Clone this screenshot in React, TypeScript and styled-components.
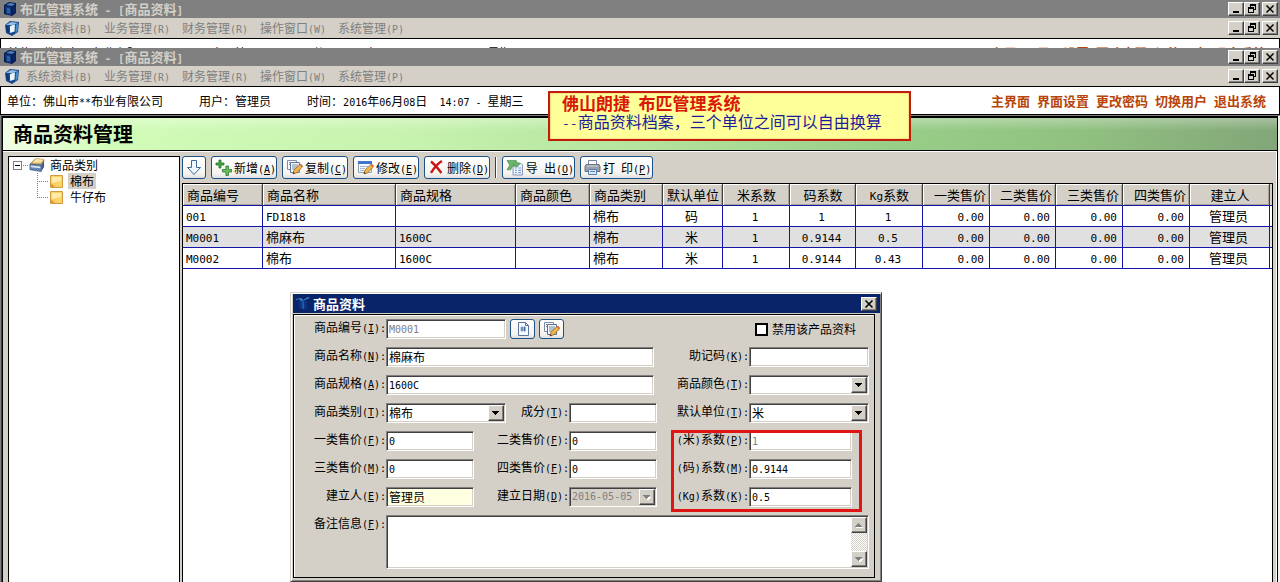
import React from "react";
import styled, { createGlobalStyle, css } from "styled-components";

const face = "#d4d0c8";
const sans = `"Noto Sans CJK SC", "Liberation Sans", sans-serif`;
const mono = `"DejaVu Sans Mono", "Liberation Mono", monospace`;

const GlobalStyle = createGlobalStyle`
  *, *::before, *::after { box-sizing: border-box; }
  body { margin: 0; background: ${face}; }
  button, input, select, textarea { font: inherit; color: inherit; margin: 0; }
`;

const raised = css`
  border: 1px solid;
  border-color: #fff #404040 #404040 #fff;
  box-shadow: inset -1px -1px 0 #808080;
  background: ${face};
`;

const sunken = css`
  border: 1px solid;
  border-color: #808080 #fff #fff #808080;
  box-shadow: inset 1px 1px 0 #404040, inset -1px -1px 0 ${face};
`;

/* ---------- text ---------- */

const Latin = styled.span`
  font-family: ${mono};
  font-size: var(--latin, 10px);
  line-height: 1;
  white-space: pre;
`;

const Key = styled.u`
  text-underline-offset: 1px;
`;

/* Sets half-width runs in the fixed-pitch face; "&" marks the access key. */
function Mixed({ text }: { text: string }) {
  const runs = text.match(/[\x00-\x7f]+|[^\x00-\x7f]+/g) ?? [];
  return (
    <>
      {runs.map((run, i) => {
        if (run.charCodeAt(0) > 127) return <span key={i}>{run}</span>;
        const at = run.indexOf("&");
        if (at < 0) return <Latin key={i}>{run}</Latin>;
        return (
          <Latin key={i}>
            {run.slice(0, at)}
            <Key>{run[at + 1]}</Key>
            {run.slice(at + 2)}
          </Latin>
        );
      })}
    </>
  );
}

/* ---------- shell ---------- */

const Shell = styled.div`
  position: relative;
  display: flex;
  flex-direction: column;
  height: 100vh;
  overflow: hidden;
  font-family: ${sans};
  font-size: 12px;
  line-height: 16px;
  color: #000;
`;

const BackWindow = styled.div`
  flex: none;
  height: 48px;
  overflow: hidden;
`;

const Frame = styled.header`
  flex: none;
`;

const TitleBar = styled.div`
  --latin: 11px;
  display: flex;
  align-items: center;
  gap: 2px;
  height: 18px;
  padding: 0 2px 0 3px;
  background: #808080;
  color: ${face};
  font-size: 13px;
  font-weight: 700;
`;

const MenuBar = styled.nav`
  display: flex;
  align-items: center;
  height: 20px;
  padding: 0 2px 0 5px;
  background: ${face};
`;

const MenuItem = styled.button`
  margin-left: 6px;
  padding: 0;
  width: 72px;
  border: 0;
  background: none;
  color: #808080;
  text-align: left;
  white-space: nowrap;
`;

const WindowButtons = styled.div`
  display: flex;
  margin-left: auto;
`;

const WindowButton = styled.button<{ $apart?: boolean }>`
  ${raised}
  display: grid;
  place-items: center;
  width: 16px;
  height: 14px;
  padding: 0;
  margin-left: ${(p) => (p.$apart ? 2 : 0)}px;
`;

const InfoBar = styled.div`
  display: flex;
  align-items: center;
  height: 29px;
  padding: 0 13px 0 6px;
  border: 1px solid #000;
  background: #fff;
  white-space: nowrap;
`;

const InfoText = styled.span`
  margin-right: 36px;
`;

const QuickLinks = styled.nav`
  display: flex;
  gap: 7px;
  margin-left: auto;
  font-size: 13px;
  font-weight: 700;
`;

const QuickLink = styled.a`
  color: #b84408;
  text-decoration: none;
`;

const Workspace = styled.main`
  flex: 1;
  min-height: 0;
  display: flex;
  padding: 0 2px 0 1px;
  border-top: 1px solid #808080;
  border-left: 1px solid #808080;
  background: linear-gradient(90deg, #404040 50%, #f4f2ee 50%);
`;

const Child = styled.section`
  flex: 1;
  min-width: 0;
  display: flex;
  flex-direction: column;
  border: solid #000;
  border-width: 2px 1px 0 1px;
`;

const Heading = styled.h1`
  flex: none;
  margin: 0;
  height: 33px;
  padding-left: 10px;
  border-bottom: 1px solid #000;
  background: linear-gradient(180deg, rgba(255, 255, 255, 0.3), rgba(255, 255, 255, 0) 40%),
    linear-gradient(93deg, #f2ffe8 0%, #d2fcb8 8%, #c6f3ae 32%, #b4e49e 50%, #98ce88 70%, #90c080 85%, #82a678 100%);
  font-size: 20px;
  line-height: 32px;
`;

const Panel = styled.div`
  flex: 1;
  min-height: 0;
  display: flex;
  gap: 2px;
  padding: 4px 3px 0 5px;
  border-top: 1px solid #fff;
  border-right: 1px solid #fff;
  background: ${face};
`;

/* ---------- tree ---------- */

const Tree = styled.ul`
  flex: none;
  width: 172px;
  margin: 0;
  padding: 0 0 0 4px;
  border: 1px solid #000;
  border-bottom: 0;
  background: #fff;
  list-style: none;
`;

const Branch = styled.ul`
  margin: 0;
  padding: 0 0 0 23px;
  list-style: none;
`;

const Node = styled.div`
  display: flex;
  align-items: center;
  height: 16px;
`;

const NodeName = styled.span<{ $active?: boolean }>`
  margin-left: 5px;
  background: ${(p) => (p.$active ? face : "none")};
  ${Branch} & { padding: 0 2px; }
`;

/* ---------- toolbar and grid ---------- */

const Main = styled.div`
  flex: 1;
  min-width: 0;
  display: flex;
  flex-direction: column;
  gap: 4px;
`;

const Toolbar = styled.div`
  display: flex;
  align-items: center;
  gap: 5px;
  height: 23px;
`;

const plate = css`
  display: flex;
  align-items: center;
  border: 1px solid #1d5187;
  border-radius: 3px;
  background: linear-gradient(180deg, #fff, #f4f3ee 80%, #dfe0e4);
`;

const ToolButton = styled.button<{ $w: number }>`
  ${plate}
  gap: 2px;
  width: ${(p) => p.$w}px;
  height: 23px;
  padding: 0 0 0 3px;
  white-space: nowrap;
`;

const Divider = styled.span`
  width: 2px;
  height: 21px;
  border-left: 1px solid #404040;
  border-right: 1px solid #fff;
`;

const GridBox = styled.div`
  --latin: 11px;
  flex: 1;
  min-height: 0;
  overflow: hidden;
  border: solid #000;
  border-width: 1px 1px 0 1px;
  background: #fff;
  font-size: 13px;
`;

const Table = styled.table`
  width: 100%;
  table-layout: fixed;
  border-collapse: separate;
  border-spacing: 0;
`;

type Align = "left" | "center" | "right";

const Th = styled.th<{ $align: Align }>`
  height: 22px;
  padding: 0 3px 0 4px;
  border-right: 1px solid #404040;
  border-bottom: 1px solid #1414a8;
  box-shadow: inset 1px 1px 0 #fff, inset -1px -1px 0 #a8a498;
  background: ${face};
  font-weight: 400;
  text-align: ${(p) => p.$align};
  white-space: nowrap;
`;

const Td = styled.td<{ $align: Align }>`
  height: 21px;
  padding: 0 5px 0 3px;
  border-right: 1px solid #1414a8;
  border-bottom: 1px solid #1414a8;
  text-align: ${(p) => p.$align};
  white-space: nowrap;
`;

const Rest = styled.td<{ $head?: boolean }>`
  padding: 0;
  border-bottom: 1px solid #1414a8;
  background: ${(p) => (p.$head ? face : "none")};
`;

const Row = styled.tr<{ $selected?: boolean }>`
  background: ${(p) => (p.$selected ? "#e0e0e0" : "#fff")};
`;

/* ---------- notes laid over the windows ---------- */

const Note = styled.aside`
  --latin: 13px;
  position: absolute;
  left: 548px;
  top: 91px;
  width: 363px;
  height: 50px;
  padding-left: 12px;
  border: 2px solid #c01c0c;
  background: #ffff99;
  color: #1c1c9c;
  font-size: 16px;
  line-height: 19px;
  white-space: nowrap;
  box-shadow: inset 0 0 2px #e8a060;
`;

const NoteTitle = styled.strong`
  --latin: 14px;
  display: block;
  color: #d81808;
  font-size: 17px;
`;

const Mark = styled.div`
  position: absolute;
  left: 671px;
  top: 430px;
  width: 191px;
  height: 82px;
  border: 3px solid #e01414;
  pointer-events: none;
`;

/* ---------- dialog ---------- */

const Dialog = styled.section`
  position: absolute;
  left: 290px;
  top: 292px;
  width: 592px;
  padding: 1px 1px 3px 2px;
  border: 1px solid;
  border-color: ${face} #404040 #404040 ${face};
  box-shadow: inset 1px 1px 0 #fff, inset -1px -1px 0 #808080;
  background: ${face};
`;

const DialogTitle = styled.h2`
  display: flex;
  align-items: center;
  gap: 3px;
  height: 19px;
  margin: 0 0 1px;
  padding: 0 3px;
  background: #0a246a;
  color: #fff;
  font-size: 13px;
  font-weight: 700;
`;

const Form = styled.form`
  display: grid;
  grid-template-columns: 91px 88px 95px 88px 92px 120px;
  grid-auto-rows: 28px;
  align-items: start;
  margin-right: 5px;
  padding: 4px 2px 34px 1px;
  border: 1px solid #000;
  box-shadow: inset 1px 1px 0 #fff;
`;

const Label = styled.label<{ $col: number; $row: number }>`
  grid-column: ${(p) => p.$col};
  grid-row: ${(p) => p.$row};
  text-align: right;
  white-space: nowrap;
`;

const Slot = styled.div<{ $col: string; $row: number }>`
  grid-column: ${(p) => p.$col};
  grid-row: ${(p) => p.$row};
  display: flex;
  gap: 4px;
`;

const TextBox = styled.input<{ $w: number; $latin?: boolean; $tint?: boolean }>`
  ${sunken}
  width: ${(p) => p.$w}px;
  height: 20px;
  padding: ${(p) => (p.$latin ? "0 2px" : "0 2px 2px")};
  border-radius: 0;
  outline: 0;
  background: ${(p) => (p.$tint ? "#ffffe1" : "#fff")};
  font-family: ${(p) => (p.$latin ? mono : sans)};
  font-size: ${(p) => (p.$latin ? 10 : 12)}px;
  &:disabled { color: #808080; }
`;

const SelectFrame = styled.div<{ $w: number; $off?: boolean }>`
  ${sunken}
  position: relative;
  display: flex;
  width: ${(p) => p.$w}px;
  height: 20px;
  padding: 1px;
  background: ${(p) => (p.$off ? face : "#fff")};
`;

const Select = styled.select<{ $latin?: boolean }>`
  appearance: none;
  width: 100%;
  padding: 0 1px;
  border: 0;
  outline: 0;
  background: none;
  font-family: ${(p) => (p.$latin ? mono : sans)};
  font-size: ${(p) => (p.$latin ? 10 : 12)}px;
  line-height: 16px;
  &:disabled { color: #808080; opacity: 1; }
`;

const Arrow = styled.span`
  ${raised}
  position: absolute;
  right: 1px;
  top: 1px;
  bottom: 1px;
  width: 16px;
  display: grid;
  place-items: center;
  pointer-events: none;
`;

const IconButton = styled.button`
  ${plate}
  justify-content: center;
  width: 25px;
  height: 20px;
  padding: 0;
`;

const CheckLabel = styled.label`
  display: flex;
  align-items: center;
  gap: 4px;
  padding: 2px 0 0 6px;
  white-space: nowrap;
`;

const Check = styled.input`
  appearance: none;
  width: 13px;
  height: 13px;
  border: 2px solid #000;
  background: #fff;
`;

const Memo = styled.div`
  ${sunken}
  grid-column: 2 / 7;
  grid-row: 8;
  display: flex;
  height: 54px;
  padding: 1px;
  background: #fff;
`;

const MemoText = styled.textarea`
  flex: 1;
  padding: 0 1px;
  border: 0;
  outline: 0;
  resize: none;
  overflow: hidden;
  background: none;
`;

const Track = styled.div`
  display: flex;
  flex-direction: column;
  justify-content: space-between;
  width: 16px;
  background: repeating-conic-gradient(#fff 0 25%, ${face} 0 50%) 0 0 / 2px 2px;
`;

const TrackButton = styled.button`
  ${raised}
  display: grid;
  place-items: center;
  width: 16px;
  height: 16px;
  padding: 0;
`;

/* ---------- icons ---------- */

const Triangle = ({ up, grey }: { up?: boolean; grey?: boolean }) => (
  <svg width="8" height="5" viewBox="0 0 8 5" shapeRendering="crispEdges">
    {grey && <path d={up ? "M1 5h7v-1h-7z" : "M1 2h7l-3 3h-1z"} fill="#fff" />}
    <path d={up ? "M0 4h7L3.5 0z" : "M0 0h7L3.5 4z"} fill={grey ? "#808080" : "#000"} />
  </svg>
);

const Minimize = () => (
  <svg width="12" height="10" shapeRendering="crispEdges"><path d="M3 7h6v2H3z" /></svg>
);
const Restore = () => (
  <svg width="12" height="10" shapeRendering="crispEdges" fill="none" stroke="#000">
    <path d="M4 1h6M4.5 0v3M9.5 0v6M7 5.5h3M2 4h6M2.5 3v6M7.5 3v6M2 8.5h6M4 .5h6M2 3.5h6" />
  </svg>
);
const Close = () => (
  <svg width="10" height="10" viewBox="0 0 10 10">
    <path d="M1.500 1.500l7 7M8.500 1.500l-7 7" stroke="#000" strokeWidth="1.500" />
  </svg>
);

const BoxIcon = () => (
  <svg width="15" height="16" viewBox="0 0 15 16">
    <path d="M1 4l5-3 7 1v10l-4 3-8-2z" fill="#0a1c50" />
    <path d="M3 4l4-2 5 1-3 2z" fill="#4c83bd" />
    <path d="M2 5l6 1v8l-5-1z" fill="#123a7c" />
    <path d="M4 7l3 .5v5L4 12z" fill="#2a62ac" />
    <path d="M10 6l2-2v7l-2 2z" fill="#0b2868" />
  </svg>
);
const CubeIcon = () => (
  <svg width="15" height="16" viewBox="0 0 15 16">
    <path d="M0 5l5-4 9 1-1 10-6 4-6-3z" fill="#1b4a8c" />
    <path d="M1 5l5-3 7 1-5 2z" fill="#8fc0e6" />
    <path d="M5 6l5-1.500-.5 7L5 13z" fill="#eaf4fb" />
    <path d="M1 6l2 .5 1 6-2-1z" fill="#15306e" />
    <path d="M11 5l2-2-.5 8-2 2z" fill="#4a90cc" />
  </svg>
);
const DialogIcon = () => (
  <svg width="14" height="15" viewBox="0 0 14 15">
    <path d="M3 5l3-1 5 1v7l-3 2-5-2z" fill="#0c3480" />
    <path d="M0 3l5-1 2 2 5-3 2 1-5 2-4 1-2-2-3 1z" fill="#3f86c0" />
    <path d="M6 5l2 .5v8L6 12z" fill="#1d5aa4" />
  </svg>
);
const ArrowDown = () => (
  <svg width="17" height="17" viewBox="0 0 17 17">
    <path d="M5.500 1.500h5v7h4l-6.500 7-6.500-7h4z" fill="#eef6ff" stroke="#3c6a9c" />
  </svg>
);
const Plus = () => (
  <svg width="17" height="17" viewBox="0 0 17 17">
    <path d="M4 1h2v3h3v2H6v3H4V6H1V4h3z" fill="#4aa646" stroke="#1f7424" strokeWidth=".8" />
    <path d="M11 7h2.500v3.500H17V13h-3.500v3.500H11V13H7.500v-2.500H11z" fill="#6cc264" stroke="#1f7424" strokeWidth=".8" />
  </svg>
);
const Pencil = () => (
  <>
    <path d="M7 15l1-4 6-5.500 2.500 2.500-6 6z" fill="#f1b545" stroke="#8a5a28" strokeWidth=".7" />
    <path d="M14 5.500l1-.8L17 7l-1 1z" fill="#d8563c" />
    <path d="M7 15l.5-2 1.500 1.500z" fill="#333" />
  </>
);
const Copy = () => (
  <svg width="17" height="17" viewBox="0 0 17 17">
    <path d="M1.500 1.500h9v9h-9z" fill="#fff" stroke="#7c8ca8" />
    <path d="M4.500 3.500h9v10h-9z" fill="#f6f9ff" stroke="#5d6f90" />
    <path d="M3 3.500h1M3 5.500h1M6 6h6M6 8h6M6 10h5" stroke="#7686a4" />
    <Pencil />
  </svg>
);
const Edit = () => (
  <svg width="17" height="17" viewBox="0 0 17 17">
    <path d="M1.500 2.500h13v11h-13z" fill="#f4f8ff" stroke="#8d9cb8" />
    <path d="M1 2h14v3H1z" fill="#3f74cc" />
    <path d="M3 7.500h8M3 9.500h5M3 11.500h4" stroke="#a4b2c8" />
    <Pencil />
  </svg>
);
const Delete = () => (
  <svg width="17" height="17" viewBox="0 0 17 17">
    <path d="M3 2.500c4 3 7 7 10.500 11.500M14 2C9 5 6 9 3 14" stroke="#cc1414" strokeWidth="2.400" fill="none" />
  </svg>
);
const Export = () => (
  <svg width="19" height="17" viewBox="0 0 19 17">
    <path d="M7.500 4.500h9l1 1v11h-10z" fill="#f2f7ff" stroke="#7c90b4" />
    <path d="M9.500 9h2M13 9h3M9.500 11.500h2M13 11.500h3M9.500 14h2M13 14h3" stroke="#7c9ccc" strokeWidth="1.200" />
    <path d="M1 1h10v2l4 1-3 4-4-1 1-2-2 2-2 4H1l3-5z" fill="#6cb46c" stroke="#35803c" strokeWidth=".6" />
  </svg>
);
const Print = () => (
  <svg width="17" height="17" viewBox="0 0 17 17">
    <path d="M4.500 1.500h8v5h-8z" fill="#fff" stroke="#7484a0" />
    <path d="M2 5.500h13l1 2v5H1v-5z" fill="#9a9fa8" stroke="#565c68" strokeWidth=".8" />
    <path d="M3 7h11" stroke="#d4d8e0" />
    <path d="M4.500 10.500h8v5h-8z" fill="#dbeafc" stroke="#5a7cb0" />
    <path d="M6 12.500h5" stroke="#5a7cb0" />
  </svg>
);
const PageNumber = () => (
  <svg width="16" height="16" viewBox="0 0 16 16">
    <path d="M3.500 1.500h7l3 3v10h-10z" fill="#f4f9ff" stroke="#5d7398" />
    <path d="M10.500 1.500v3h3" fill="none" stroke="#5d7398" />
    <path d="M7 5.500v5M9.500 5.500v5M5.500 7h5.500M5.500 9h5.500" stroke="#3b62a0" strokeWidth=".9" />
  </svg>
);
const Drawer = () => (
  <svg width="16" height="16" viewBox="0 0 17 16">
    <path d="M1 7l5-5 10 1-3 5z" fill="#e9bd5c" stroke="#84683a" strokeWidth=".6" />
    <path d="M3 6l4-5 9 1-3 4z" fill="#f9e4a8" stroke="#9a7c44" strokeWidth=".5" />
    <path d="M1 7l12 1v7L1 13z" fill="#6485b4" stroke="#38547e" strokeWidth=".7" />
    <path d="M13 8l3-5v7l-3 5z" fill="#3c5c90" />
    <path d="M2 8.500l10 1v2l-10-1z" fill="#dbe6f4" />
  </svg>
);
const Leaf = () => (
  <svg width="13" height="13" viewBox="0 0 13 13">
    <path d="M.5 .5h12v12H.5z" fill="#fbd168" stroke="#d19c40" />
    <path d="M2 2h9v4L2 8z" fill="#ffeaa6" />
    <path d="M1 8l4 4H1z" fill="#e39a34" />
  </svg>
);
const Expander = () => (
  <svg width="16" height="16" viewBox="0 0 16 16" shapeRendering="crispEdges" fill="none">
    <path d="M.5 4.500h8v8h-8z" stroke="#808080" />
    <path d="M2 8.500h5" stroke="#000" />
    <path d="M10 8.500h6" stroke="#808080" strokeDasharray="1 1" />
  </svg>
);
const Connector = ({ last }: { last?: boolean }) => (
  <svg width="14" height="16" viewBox="0 0 14 16" shapeRendering="crispEdges">
    <path d={last ? "M1.500 0v8" : "M1.500 0v16"} stroke="#808080" strokeDasharray="1 1" />
    <path d="M1 8.500h11" stroke="#808080" strokeDasharray="1 1" />
  </svg>
);

/* ---------- data ---------- */

const menus = ["系统资料(B)", "业务管理(R)", "财务管理(R)", "操作窗口(W)", "系统管理(P)"];
const links = ["主界面", "界面设置", "更改密码", "切换用户", "退出系统"];

const columns: { name: string; width: number; align: Align }[] = [
  { name: "商品编号", width: 80, align: "left" },
  { name: "商品名称", width: 133, align: "left" },
  { name: "商品规格", width: 120, align: "left" },
  { name: "商品颜色", width: 74, align: "left" },
  { name: "商品类别", width: 73, align: "left" },
  { name: "默认单位", width: 60, align: "center" },
  { name: "米系数", width: 67, align: "center" },
  { name: "码系数", width: 66, align: "center" },
  { name: "Kg系数", width: 67, align: "center" },
  { name: "一类售价", width: 67, align: "right" },
  { name: "二类售价", width: 66, align: "right" },
  { name: "三类售价", width: 67, align: "right" },
  { name: "四类售价", width: 67, align: "right" },
  { name: "建立人", width: 80, align: "center" },
];

const rows = [
  ["001", "FD1818", "", "", "棉布", "码", "1", "1", "1", "0.00", "0.00", "0.00", "0.00", "管理员"],
  ["M0001", "棉麻布", "1600C", "", "棉布", "米", "1", "0.9144", "0.5", "0.00", "0.00", "0.00", "0.00", "管理员"],
  ["M0002", "棉布", "1600C", "", "棉布", "米", "1", "0.9144", "0.43", "0.00", "0.00", "0.00", "0.00", "管理员"],
];

/* ---------- parts ---------- */

function Controls() {
  return (
    <WindowButtons>
      <WindowButton aria-label="最小化"><Minimize /></WindowButton>
      <WindowButton aria-label="还原"><Restore /></WindowButton>
      <WindowButton aria-label="关闭" $apart><Close /></WindowButton>
    </WindowButtons>
  );
}

function WindowFrame() {
  return (
    <Frame>
      <TitleBar>
        <BoxIcon />
        <span><Mixed text="布匹管理系统 - [商品资料]" /></span>
        <Controls />
      </TitleBar>
      <MenuBar>
        <CubeIcon />
        {menus.map((m) => <MenuItem key={m}><Mixed text={m} /></MenuItem>)}
        <Controls />
      </MenuBar>
      <InfoBar>
        <InfoText><Mixed text="单位：佛山市**布业有限公司" /></InfoText>
        <InfoText><Mixed text="用户：管理员" /></InfoText>
        <InfoText><Mixed text="时间：2016年06月08日  14:07 - 星期三" /></InfoText>
        <QuickLinks>
          {links.map((l) => <QuickLink key={l} href="#">{l}</QuickLink>)}
        </QuickLinks>
      </InfoBar>
    </Frame>
  );
}

type FieldProps = {
  id: string; label: string; col: number; row: number; w: number;
  value?: string; span?: number; latin?: boolean; off?: boolean; tint?: boolean;
  children?: React.ReactNode;
};

function Field({ id, label, col, row, w, value = "", span = 1, latin, off, tint, children }: FieldProps) {
  return (
    <>
      <Label htmlFor={id} $col={col} $row={row}><Mixed text={label} /></Label>
      <Slot $col={`${col + 1} / span ${span}`} $row={row}>
        <TextBox id={id} defaultValue={value} $w={w} $latin={latin} $tint={tint} disabled={off} />
        {children}
      </Slot>
    </>
  );
}

function Choice({ id, label, col, row, w, value = "", span = 1, latin, off }: FieldProps) {
  return (
    <>
      <Label htmlFor={id} $col={col} $row={row}><Mixed text={label} /></Label>
      <Slot $col={`${col + 1} / span ${span}`} $row={row}>
        <SelectFrame $w={w} $off={off}>
          <Select id={id} $latin={latin} disabled={off} defaultValue={value}>
            <option>{value}</option>
          </Select>
          <Arrow><Triangle grey={off} /></Arrow>
        </SelectFrame>
      </Slot>
    </>
  );
}

function ProductDialog() {
  return (
    <Dialog role="dialog" aria-labelledby="dialog-title">
      <DialogTitle>
        <DialogIcon />
        <span id="dialog-title">商品资料</span>
        <WindowButtons>
          <WindowButton aria-label="关闭"><Close /></WindowButton>
        </WindowButtons>
      </DialogTitle>
      <Form>
        <Field id="code" label="商品编号(&I):" col={1} row={1} w={120} span={3} value="M0001" latin off>
          <IconButton type="button" aria-label="编号"><PageNumber /></IconButton>
          <IconButton type="button" aria-label="复制"><Copy /></IconButton>
        </Field>
        <Slot $col="6" $row={1}>
          <CheckLabel><Check type="checkbox" />禁用该产品资料</CheckLabel>
        </Slot>
        <Field id="name" label="商品名称(&N):" col={1} row={2} w={268} span={3} value="棉麻布" />
        <Field id="memory" label="助记码(&K):" col={5} row={2} w={120} />
        <Field id="spec" label="商品规格(&A):" col={1} row={3} w={268} span={3} value="1600C" latin />
        <Choice id="colour" label="商品颜色(&T):" col={5} row={3} w={120} />
        <Choice id="kind" label="商品类别(&T):" col={1} row={4} w={120} span={2} value="棉布" />
        <Field id="part" label="成分(&T):" col={3} row={4} w={88} />
        <Choice id="unit" label="默认单位(&T):" col={5} row={4} w={120} value="米" />
        <Field id="price1" label="一类售价(&F):" col={1} row={5} w={88} value="0" latin />
        <Field id="price2" label="二类售价(&F):" col={3} row={5} w={88} value="0" latin />
        <Field id="metre" label="(米)系数(&P):" col={5} row={5} w={103} value="1" latin off />
        <Field id="price3" label="三类售价(&M):" col={1} row={6} w={88} value="0" latin />
        <Field id="price4" label="四类售价(&F):" col={3} row={6} w={88} value="0" latin />
        <Field id="yard" label="(码)系数(&M):" col={5} row={6} w={103} value="0.9144" latin />
        <Field id="author" label="建立人(&E):" col={1} row={7} w={88} value="管理员" tint />
        <Choice id="date" label="建立日期(&D):" col={3} row={7} w={88} value="2016-05-05" latin off />
        <Field id="kilo" label="(Kg)系数(&K):" col={5} row={7} w={103} value="0.5" latin />
        <Label htmlFor="memo" $col={1} $row={8}><Mixed text="备注信息(&F):" /></Label>
        <Memo>
          <MemoText id="memo" />
          <Track>
            <TrackButton type="button" aria-label="向上"><Triangle up grey /></TrackButton>
            <TrackButton type="button" aria-label="向下"><Triangle grey /></TrackButton>
          </Track>
        </Memo>
      </Form>
    </Dialog>
  );
}

export default function App() {
  return (
    <Shell>
      <GlobalStyle />
      <BackWindow><WindowFrame /></BackWindow>
      <WindowFrame />
      <Workspace>
        <Child>
          <Heading>商品资料管理</Heading>
          <Panel>
            <Tree>
              <li>
                <Node><Expander /><Drawer /><NodeName>商品类别</NodeName></Node>
                <Branch>
                  <li><Node><Connector /><Leaf /><NodeName $active>棉布</NodeName></Node></li>
                  <li><Node><Connector last /><Leaf /><NodeName>牛仔布</NodeName></Node></li>
                </Branch>
              </li>
            </Tree>
            <Main>
              <Toolbar>
                <ToolButton $w={24} aria-label="下移"><ArrowDown /></ToolButton>
                <ToolButton $w={66}><Plus /><span><Mixed text="新增(&A)" /></span></ToolButton>
                <ToolButton $w={66}><Copy /><span><Mixed text="复制(&C)" /></span></ToolButton>
                <ToolButton $w={66}><Edit /><span><Mixed text="修改(&E)" /></span></ToolButton>
                <ToolButton $w={66}><Delete /><span><Mixed text="删除(&D)" /></span></ToolButton>
                <Divider />
                <ToolButton $w={73}><Export /><span><Mixed text="导 出(&O)" /></span></ToolButton>
                <ToolButton $w={73}><Print /><span><Mixed text="打 印(&P)" /></span></ToolButton>
              </Toolbar>
              <GridBox>
                <Table>
                  <colgroup>
                    {columns.map((c) => <col key={c.name} width={c.width} />)}
                    <col />
                  </colgroup>
                  <thead>
                    <tr>
                      {columns.map((c) => <Th key={c.name} $align={c.align}><Mixed text={c.name} /></Th>)}
                      <Rest $head />
                    </tr>
                  </thead>
                  <tbody>
                    {rows.map((r, i) => (
                      <Row key={r[0]} $selected={i === 1}>
                        {r.map((v, j) => <Td key={j} $align={columns[j].align}><Mixed text={v} /></Td>)}
                        <Rest />
                      </Row>
                    ))}
                  </tbody>
                </Table>
              </GridBox>
            </Main>
          </Panel>
        </Child>
      </Workspace>
      <Note>
        <NoteTitle><Mixed text="佛山朗捷 布匹管理系统" /></NoteTitle>
        <Mixed text="--商品资料档案，三个单位之间可以自由换算" />
      </Note>
      <ProductDialog />
      <Mark />
    </Shell>
  );
}
